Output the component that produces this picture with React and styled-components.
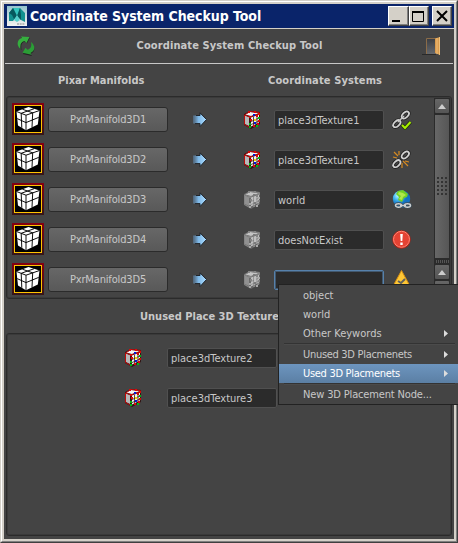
import React from "react";
import styled, { createGlobalStyle, css } from "styled-components";

const Global = createGlobalStyle`
  * { box-sizing: border-box; }
  html, body { margin: 0; padding: 0; background: #d4d0c8; overflow: hidden; }
  body { font: 11px/14px "DejaVu Sans Condensed", "DejaVu Sans", sans-serif; font-stretch: condensed; color: #c8c8c8; }
  svg { display: block; flex: none; }
`;

const Frame = styled.main`
  position: relative;
  width: 458px;
  height: 543px;
  border: 1px solid;
  border-color: #d4d0c8 #404040 #404040 #d4d0c8;
`;
const Bevel = styled.div`
  height: 100%;
  border: 1px solid;
  border-color: #fff #808080 #808080 #fff;
  background: #d4d0c8;
  padding: 2px;
`;
const TitleBar = styled.header`
  height: 24px;
  display: flex;
  align-items: center;
  background: #0a246a;
  padding: 0 2px 0 3px;
`;
const Title = styled.h1`
  margin: 0 auto 0 3px;
  font-size: 14px;
  line-height: 20px;
  font-weight: bold;
  color: #fff;
  white-space: nowrap;
  letter-spacing: -0.05px;
`;
const WinButton = styled.button`
  width: ${(p) => (p.$wide ? 21 : 20)}px;
  height: 20px;
  padding: 0;
  margin-left: ${(p) => p.$gap || 0}px;
  border: 1px solid;
  border-color: #fff #404040 #404040 #fff;
  box-shadow: inset -1px -1px #808080;
  background: #d4d0c8;
`;
const Body = styled.div`
  height: 510px;
  margin-top: 1px;
  background: #444;
  padding: 0 1px;
`;
const ToolHeader = styled.div`
  height: 35px;
  display: grid;
  grid-template-columns: 31px 1fr 42px;
  align-items: center;
  border-bottom: 1px solid #c8c8c8;
  padding-left: 12px;
`;
const Heading = styled.h2`
  margin: 0;
  font-size: 11px;
  line-height: 14px;
  font-weight: bold;
  color: #c8c8c8;
  text-align: ${(p) => p.$align || "left"};
  letter-spacing: ${(p) => p.$track || 0}px;
  white-space: nowrap;
`;
const ColumnHeads = styled.div`
  height: 32px;
  display: grid;
  grid-template-columns: 210px 1fr;
  align-items: center;
  padding: 1px 0 0 53px;
`;
const Panel = styled.section`
  height: ${(p) => p.$height}px;
  width: 446px;
  margin-left: 1px;
  border: 1px solid #2b2b2b;
  border-radius: 3px;
  box-shadow: inset 0 0 0 1px #3a3a3a;
  display: flex;
  overflow: hidden;
`;
const Rows = styled.div`
  flex: 1;
  padding: 6px 0 0 5px;
`;
const Row = styled.div`
  height: 40px;
  display: grid;
  grid-template-columns: 36px 120px 75px 31px 118px 20px;
  align-items: start;
`;
const Cell = styled.div`
  padding: ${(p) => p.$top}px 0 0 ${(p) => p.$left || 0}px;
`;
const NodeButton = styled.button`
  width: 120px;
  height: 25px;
  margin-top: 4px;
  padding: 1px 0 0;
  border: 1px solid #2b2b2b;
  border-radius: 3px;
  background: linear-gradient(#676767, #595959);
  color: #c8c8c8;
  font: inherit;
  letter-spacing: -0.15px;
`;
const Field = styled.div`
  width: 110px;
  height: 20px;
  margin-top: ${(p) => p.$top || 0}px;
  padding: 3px 0 0 3px;
  border: 1px solid ${(p) => (p.$focus ? "#5681ab" : "#505050")};
  border-radius: 2px;
  background: #2b2b2b;
  color: #c8c8c8;
  white-space: nowrap;
  ${(p) => p.$focus && css`box-shadow: inset 0 0 0 1px #42586e;`}
`;
const Scroll = styled.div`
  width: 16px;
  margin: 1px 1px 0 0;
  background: #2b2b2b;
  display: flex;
  flex-direction: column;
  padding: 1px;
  gap: 2px;
`;
const ScrollButton = styled.div`
  height: 14px;
  flex: none;
  background: linear-gradient(#666, #555);
  display: grid;
  place-items: center;
  border-radius: 1px;
`;
const Thumb = styled.div`
  height: 143px;
  flex: none;
  background: linear-gradient(90deg, #676767, #565656);
  display: grid;
  place-items: center;
`;
const Track = styled.div`
  height: 3px;
  flex: none;
  background: repeating-linear-gradient(90deg, #2b2b2b 0 1px, #555 1px 2px);
`;
const SectionHead = styled.div`
  height: 34px;
  padding: 11px 0 0 135px;
`;
const UnusedRows = styled.div`
  padding-top: 14px;
`;
const UnusedRow = styled.div`
  height: 40px;
  display: grid;
  grid-template-columns: 43px 134px 20px;
  padding-left: 117px;
  align-items: start;
`;
const Menu = styled.nav`
  position: absolute;
  left: 277px;
  top: 283px;
  width: 182px;
  height: 121px;
  border: 1px solid #222;
  border-right: 0;
  background: #444;
  padding-top: 1px;
`;
const MenuItem = styled.div`
  height: 19px;
  display: flex;
  align-items: center;
  justify-content: space-between;
  padding: 0 12px 0 24px;
  white-space: nowrap;
  letter-spacing: ${(p) => p.$track || 0}px;
  ${(p) => p.$active && css`background: linear-gradient(#6d95bf, #5b7fa4); color: #fff;`}
`;
const MenuRule = styled.div`
  height: 2px;
  margin: 0 5px;
  border-top: 1px solid #333;
  border-bottom: 1px solid #4b4b4b;
`;

const MayaIcon = () => (
  <svg width="20" height="20" viewBox="0 0 20 20">
    <defs><linearGradient id="mg" x2="0" y2="1"><stop stopColor="#93c4ce" /><stop offset=".65" stopColor="#d8e2e4" /><stop offset="1" stopColor="#f3f3f1" /></linearGradient></defs>
    <rect width="20" height="20" fill="url(#mg)" />
    <path d="M2 15V7l4-5h7l5 5v9l-4-2-4-4-4 5z" fill="#12918f" />
    <path d="M6 2h7l-3 8z" fill="#35c3bd" />
    <path d="M6 2 2 7l3 2 2 4 3-3zM13 2l-3 8 4 4V9z" fill="#07595e" />
    <path d="m7 14 3-5 3 5-3 2z" fill="#55d0cc" />
    <path d="M10 18h8" stroke="#888" strokeDasharray="2 .7" />
  </svg>
);
const Minimize = () => <svg width="18" height="18"><path d="M3 14h8" stroke="#000" strokeWidth="2" /></svg>;
const Maximize = () => <svg width="18" height="18" fill="none" stroke="#000"><path d="M2.5 4.5h11v10h-11z" /><path d="M2 5h12" strokeWidth="2" /></svg>;
const Close = () => <svg width="18" height="18"><path d="m4 4 10 10M14 4 4 14" stroke="#000" strokeWidth="2" /></svg>;

const Refresh = () => (
  <svg width="19" height="21" viewBox="0 0 19 21">
    <path d="M4.500 14C0 10 1 4 6 3L4 1l9 .5-3 6-2-2C4 7 4 9 4.500 14zM14 7c5 4 4 9-.5 11l1.500 2-9-2 3-5 2 2c4-1 4-4 3-8z" fill="#222" />
    <path d="M3.500 13C-1 9 0 3.500 5 2L4 .5l8.500.5-3 6-2-2C4 6 3 8 3.500 13z" fill="#35ae3e" />
    <path d="M14 6c5 4 4 9-.5 11l1 1.700-9-2 3-5 2 2c4-1 4-4 3.500-7.700z" fill="#2b9d36" />
  </svg>
);
const Door = () => (
  <svg width="19" height="20" viewBox="0 0 19 20">
    <defs><linearGradient id="dr" x2="0" y2="1"><stop stopColor="#3a3d42" /><stop offset="1" stopColor="#65686d" /></linearGradient></defs>
    <path d="M0 18.500h14" stroke="#292929" />
    <path d="M4.500 18V2.500h11V18" fill="url(#dr)" stroke="#8b6c49" />
    <path d="M13 2.500 18 1v18l-5-2z" fill="#d99b4e" />
    <path d="M15 2v16M17.500 1v18" stroke="#f2c888" strokeWidth=".8" />
  </svg>
);
const ManifoldIcon = () => (
  <svg width="32" height="32" viewBox="0 0 32 32">
    <defs><linearGradient id="rd" x2="0" y2="1"><stop stopColor="#850010" /><stop offset="1" stopColor="#351517" /></linearGradient></defs>
    <rect width="32" height="32" fill="url(#rd)" />
    <rect x="2.500" y="2.500" width="27" height="27" fill="#000" stroke="#ffc400" />
    <path d="M4.500 8.500 16.500 4 27.500 7.500 25.800 21.500 14 27.300 6 22.500z" fill="#fff" />
    <path d="m4.500 8.500 9.500 3.700 13.500-4.700M14 12.200v15.100M9.200 10.300l.6 14.500M5.200 15.600 14 19.600l12.700-5.200M20.700 9.800 20 24.400M10.500 6.250l10.200 3.600M9.200 10.300 22 5.750" fill="none" stroke="#000" strokeWidth=".95" />
  </svg>
);
const Arrow = () => (
  <svg width="15" height="16" viewBox="0 0 15 16">
    <defs><linearGradient id="ar"><stop stopColor="#5d86ad" stopOpacity=".5" /><stop offset=".4" stopColor="#7db8e7" /><stop offset="1" stopColor="#acdcff" /></linearGradient></defs>
    <path d="M0 3.500h7V1l6.500 6.500L7 14.500v-3H0z" fill="url(#ar)" />
    <path d="M3 3.500h4V.8l6.500 6.700L7 14.600v-3H2" fill="none" stroke="#20252b" />
  </svg>
);
const redDots = [[6, 2, 0], [12, 2, 0], [16, 4, 0], [11, 5, 1], [7, 7, 0], [14, 6, 0], [16, 8, 2], [8, 10, 0], [12, 10, 3], [16, 11, 0], [7, 14, 2], [12, 13, 1], [15, 14, 0], [7, 17, 2], [11, 16, 0], [14, 16, 2]];
const CubeIcon = ({ gray }) => {
  const colors = gray ? ["#858585", "#7b7b7b", "#a8a8a8", "#c0c0c0"] : ["#d90808", "#0714d5", "#00b512", "#e5df00"];
  return (
    <svg width="19" height="20" viewBox="0 0 19 20">
      <path d="m1 4 6-3 10 1v12l-9 5-7-4z" fill={gray ? "#666" : "#341515"} />
      <path d="m2 4.500 5-2.500 9 1-8 3z" fill={gray ? "#c4c4c4" : "#f5f5f5"} />
      <path d="m2 5.500 4 1.700v8.800l-4-2z" fill={gray ? "#909090" : "#b8b8b8"} />
      <path d="m8 7.500 8-3v8l-8 4z" fill={gray ? "#c0c0c0" : "#f1f1f1"} />
      <path d="m1.500 5 5.500-3.500 9.500 1M1.500 5v9.500L6 17M2 5l5 2 9.500-3.500" fill="none" stroke={gray ? "#858585" : "#bd0c0c"} strokeWidth="1" />
      <path d="M7 8v9M10.500 7v9M14 5v9M7 12l9-4M7 15l9-4" stroke={gray ? "#777" : "#421515"} strokeWidth={gray ? ".6" : ".8"} />
      {redDots.map(([x, y, c]) => <rect key={`${x}-${y}`} x={x - 1} y={y - 1} width="2" height="2" fill={colors[c]} />)}
    </svg>
  );
};
const Links = () => (
  <>
    <g fill="none" stroke="#242424" strokeWidth="3.500"><ellipse cx="13.300" cy="5" rx="4.300" ry="2.600" transform="rotate(-43 13.300 5)" /><ellipse cx="4.800" cy="13.700" rx="4.300" ry="2.600" transform="rotate(-43 4.800 13.700)" /></g>
    <g fill="none" stroke="#d0d0d0" strokeWidth="1.800"><ellipse cx="13.300" cy="5" rx="4.300" ry="2.600" transform="rotate(-43 13.300 5)" /><ellipse cx="4.800" cy="13.700" rx="4.300" ry="2.600" transform="rotate(-43 4.800 13.700)" /></g>
  </>
);
const StatusIcon = ({ type }) => (
  <svg width="20" height="20" viewBox="0 0 20 20">
    {type === "linked" && <><Links /><path d="m6 12 6-6" stroke="#c5c5c5" strokeWidth="1.500" /><path d="m10 15 3 3 5.500-6" fill="none" stroke="#24300e" strokeWidth="3.500" /><path d="m10 15 3 3 5.500-6" fill="none" stroke="#a7ef00" strokeWidth="2" /></>}
    {type === "broken" && <><Links /><path d="m2 2 4 4M7 1v4M1 7l4 1M11 11l5 5M10 13v5M13 11l4 1" stroke="#d78a20" strokeWidth="1.200" /></>}
    {type === "world" && <><defs><radialGradient id="wo" cx=".3" cy=".3"><stop stopColor="#c5faff" /><stop offset=".5" stopColor="#43b5f0" /><stop offset="1" stopColor="#1272c2" /></radialGradient></defs><circle cx="9.500" cy="9" r="8.700" fill="url(#wo)" /><path d="m6 1 5-1 5 4-1 3-3 1-2 4-4-2 1-3-3-3z" fill="#72cf24" /><path d="m7 2 4 1 3 2-3 2-1 3-3-1 2-3-3-2z" fill="#b0e84c" /><g fill="none" stroke="#3d4a52" strokeWidth="3"><ellipse cx="6.500" cy="15.500" rx="3" ry="1.700" /><ellipse cx="15.500" cy="15.500" rx="3" ry="1.700" /></g><g fill="none" stroke="#cbd0d3" strokeWidth="1.500"><ellipse cx="6.500" cy="15.500" rx="3" ry="1.700" /><ellipse cx="15.500" cy="15.500" rx="3" ry="1.700" /><path d="M8 15.500h6" /></g></>}
    {type === "error" && <><circle cx="9.500" cy="9.500" r="9.200" fill="#b91f13" /><circle cx="9.500" cy="9.300" r="8" fill="#e44233" stroke="#ff8a77" /><path d="M8.200 4h2.600l-.5 7H8.700zM8.300 12.500h2.400V15H8.300z" fill="#fff" /></>}
    {type === "warning" && <><path d="M9.500.5 19 18H0z" fill="#ffc735" stroke="#d78f12" /><path d="m6 11 3 2 4-4" stroke="#62615b" strokeWidth="2" fill="none" /></>}
  </svg>
);
const Grip = () => (
  <svg width="12" height="21" viewBox="0 0 12 21" fill="#333">
    {[0, 4, 8].flatMap((x) => [0, 4, 8, 12, 16].map((y) => <rect key={`${x}-${y}`} x={x + 1} y={y + 1} width="2" height="2" />))}
  </svg>
);
const UpArrow = () => <svg width="8" height="5"><path d="M0 5 4 0l4 5z" fill="#ccc" /></svg>;
const SubArrow = () => <svg width="4" height="7"><path d="m0 0 4 3.500L0 7z" fill="#ddd" /></svg>;
const SelectIcon = () => <svg width="20" height="20"><ellipse cx="10" cy="14" rx="5" ry="3" fill="#242424" /><path d="m4 2 11 5-5 2-2 5z" fill="#ccc" /></svg>;

const manifolds = [
  ["PxrManifold3D1", "place3dTexture1", "linked"],
  ["PxrManifold3D2", "place3dTexture1", "broken"],
  ["PxrManifold3D3", "world", "world"],
  ["PxrManifold3D4", "doesNotExist", "error"],
  ["PxrManifold3D5", "", "warning"],
];

export default function App() {
  return (
    <>
      <Global />
      <Frame>
        <Bevel>
          <TitleBar>
            <MayaIcon />
            <Title>Coordinate System Checkup Tool</Title>
            <WinButton $wide><Minimize /></WinButton>
            <WinButton><Maximize /></WinButton>
            <WinButton $gap={3}><Close /></WinButton>
          </TitleBar>
          <Body>
            <ToolHeader>
              <Refresh />
              <Heading $align="center" $track={0.1}>Coordinate System Checkup Tool</Heading>
              <Cell $top={0} $left={11}><Door /></Cell>
            </ToolHeader>
            <ColumnHeads>
              <Heading>Pixar Manifolds</Heading>
              <Heading $track={0.12}>Coordinate Systems</Heading>
            </ColumnHeads>
            <Panel $height={203}>
              <Rows>
                {manifolds.map(([name, system, status]) => (
                  <Row key={name}>
                    <ManifoldIcon />
                    <NodeButton>{name}</NodeButton>
                    <Cell $top={9} $left={25}><Arrow /></Cell>
                    <Cell $top={7}><CubeIcon gray={status !== "linked" && status !== "broken"} /></Cell>
                    <Field $top={7} $focus={!system}>{system}</Field>
                    <Cell $top={7}><StatusIcon type={status} /></Cell>
                  </Row>
                ))}
              </Rows>
              <Scroll>
                <ScrollButton><UpArrow /></ScrollButton>
                <Thumb><Grip /></Thumb>
                <Track />
                <ScrollButton><UpArrow /></ScrollButton>
                <ScrollButton />
              </Scroll>
            </Panel>
            <SectionHead><Heading>Unused Place 3D Textures</Heading></SectionHead>
            <Panel $height={203}>
              <UnusedRows>
                {["place3dTexture2", "place3dTexture3"].map((name) => (
                  <UnusedRow key={name}><CubeIcon /><Field>{name}</Field><SelectIcon /></UnusedRow>
                ))}
              </UnusedRows>
            </Panel>
          </Body>
        </Bevel>
        <Menu>
          <MenuItem>object</MenuItem>
          <MenuItem>world</MenuItem>
          <MenuItem>Other Keywords<SubArrow /></MenuItem>
          <MenuRule />
          <MenuItem $track={-0.3}>Unused 3D Placmenets<SubArrow /></MenuItem>
          <MenuItem $active $track={-0.3}>Used 3D Placmenets<SubArrow /></MenuItem>
          <MenuRule />
          <MenuItem $track={-0.15}>New 3D Placement Node...</MenuItem>
        </Menu>
      </Frame>
    </>
  );
}
